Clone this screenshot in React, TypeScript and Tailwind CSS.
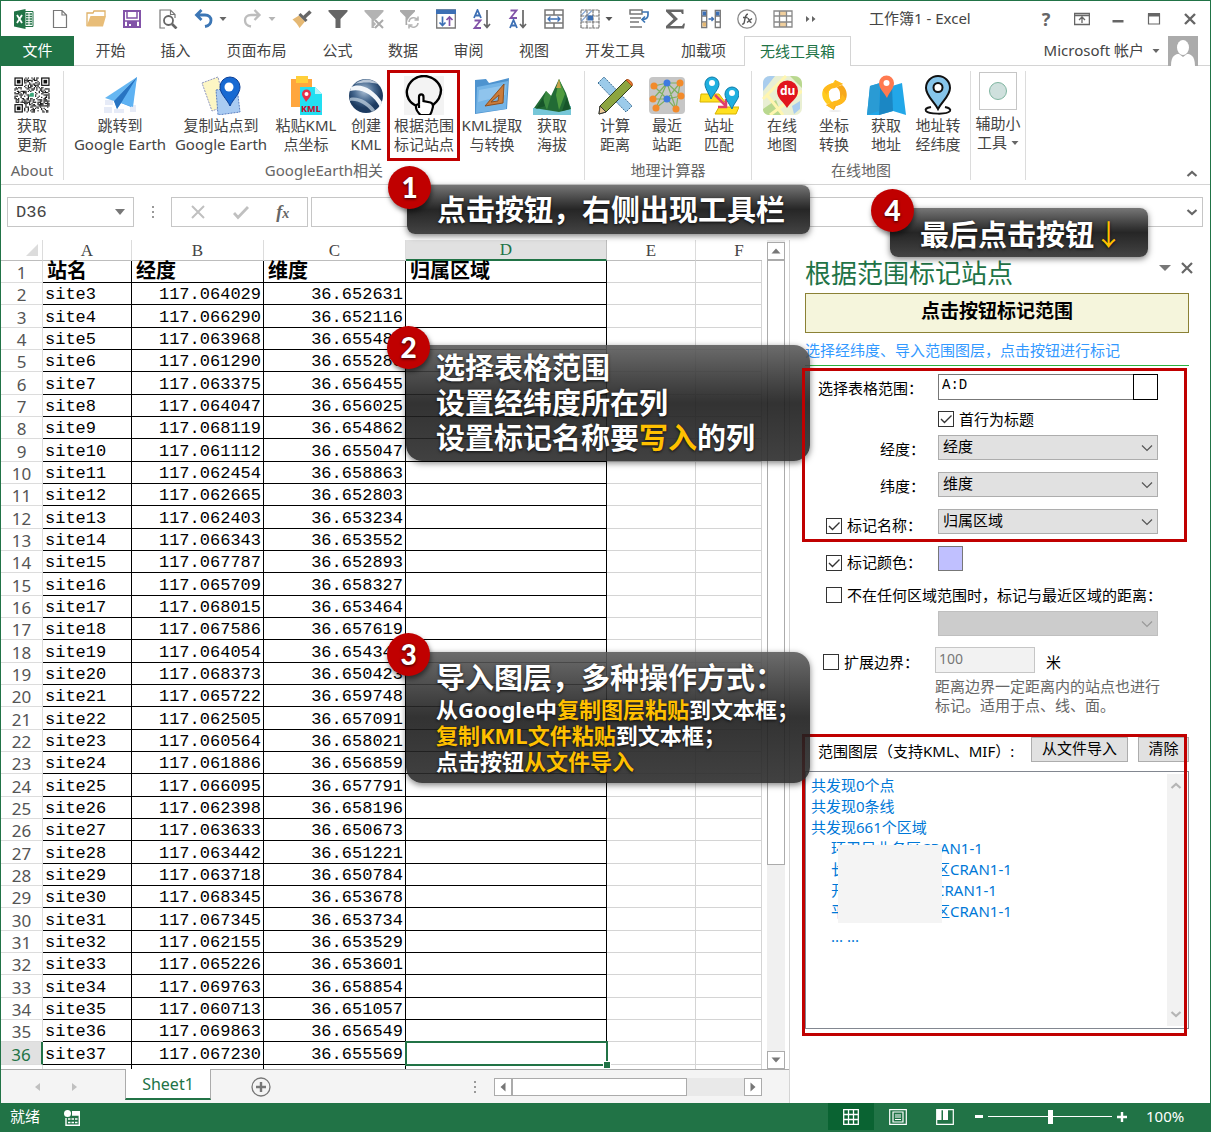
import { type ReactNode } from 'react';

const SITES = [
    ['site3', '117.064029', '36.652631'],
    ['site4', '117.066290', '36.652116'],
    ['site5', '117.063968', '36.655480'],
    ['site6', '117.061290', '36.655288'],
    ['site7', '117.063375', '36.656455'],
    ['site8', '117.064047', '36.656025'],
    ['site9', '117.068119', '36.654862'],
    ['site10', '117.061112', '36.655047'],
    ['site11', '117.062454', '36.658863'],
    ['site12', '117.062665', '36.652803'],
    ['site13', '117.062403', '36.653234'],
    ['site14', '117.066343', '36.653552'],
    ['site15', '117.067787', '36.652893'],
    ['site16', '117.065709', '36.658327'],
    ['site17', '117.068015', '36.653464'],
    ['site18', '117.067586', '36.657619'],
    ['site19', '117.064054', '36.654342'],
    ['site20', '117.068373', '36.650423'],
    ['site21', '117.065722', '36.659748'],
    ['site22', '117.062505', '36.657091'],
    ['site23', '117.060564', '36.658021'],
    ['site24', '117.061886', '36.656859'],
    ['site25', '117.066095', '36.657791'],
    ['site26', '117.062398', '36.658196'],
    ['site27', '117.063633', '36.650673'],
    ['site28', '117.063442', '36.651221'],
    ['site29', '117.063718', '36.650784'],
    ['site30', '117.068345', '36.653678'],
    ['site31', '117.067345', '36.653734'],
    ['site32', '117.062155', '36.653529'],
    ['site33', '117.065226', '36.653601'],
    ['site34', '117.069763', '36.658854'],
    ['site35', '117.060713', '36.651057'],
    ['site36', '117.069863', '36.656549'],
    ['site37', '117.067230', '36.655569'],
];

type IconProps = { children: ReactNode; size?: string; box?: string };

function Icon({ children, size = 'w-5 h-5', box = '0 0 20 20' }: IconProps) {
    return (
        <svg viewBox={box} className={`${size} shrink-0`} fill="none" aria-hidden="true">
            {children}
        </svg>
    );
}

function Caret({ color = '#666' }: { color?: string }) {
    return (
        <svg viewBox="0 0 8 4" className="h-1 w-2 shrink-0" aria-hidden="true">
            <path d="M0.5 0h7L4 4z" fill={color} />
        </svg>
    );
}

/* ---------- quick access toolbar ---------- */

const funnel = 'M0.500 1h19v1.500L12.500 10v9h-5v-9L0.500 2.500z';

const quickTools: { name: string; split?: string; icon: ReactNode }[] = [
    {
        name: 'Excel',
        icon: (
            <>
                <path d="M10 2.500h9v15h-9z" fill="#fff" stroke="#217346" />
                <path d="M12 5h2.500M15.500 5h2.500M12 7.500h2.500M15.500 7.500h2.500M12 10h2.500M15.500 10h2.500M12 12.500h2.500M15.500 12.500h2.500M12 15h2.500M15.500 15h2.500" stroke="#217346" strokeWidth="1.500" />
                <path d="M0 2.500L11.500 0v20L0 17.500z" fill="#217346" />
                <path d="M3 6l5 8M8 6l-5 8" stroke="#fff" strokeWidth="1.800" />
            </>
        ),
    },
    { name: '新建', icon: <path d="M3.500 1.500h8.500l4.500 4.500v12.500h-13zM12 1.500V6h4.500" stroke="#777" strokeWidth="1.200" fill="#fff" /> },
    {
        name: '打开',
        icon: (
            <>
                <path d="M1 17V4h6l1-2h11v5" stroke="#dfb269" strokeWidth="1.300" />
                <path d="M4.500 7H20l-3 10.500H0.500z" fill="#e8bd78" />
            </>
        ),
    },
    {
        name: '保存',
        icon: (
            <>
                <path d="M2 2h16v16H2z" stroke="#8253a8" strokeWidth="2" fill="#fff" />
                <path d="M5 2v7h10V2M2 12h16" stroke="#8253a8" strokeWidth="1.500" />
                <path d="M5 12h10v6H9v-3H7v3H5z" fill="#8253a8" />
            </>
        ),
    },
    {
        name: '打印预览',
        icon: (
            <>
                <path d="M7 19H2V1h10.500L17 5.500V9M12.500 1v4.500H17" stroke="#777" strokeWidth="1.200" />
                <circle cx="10.500" cy="11.500" r="4.500" stroke="#666" strokeWidth="1.800" />
                <path d="M14 15l4.500 4.500" stroke="#666" strokeWidth="2.600" />
            </>
        ),
    },
    {
        name: '撤消',
        split: '#666',
        icon: <path d="M7.500 1L2.500 6l5 5M2.500 6H11c8 0 8 10 0 11.500" stroke="#3c76b5" strokeWidth="2.800" />,
    },
    {
        name: '恢复',
        split: '#b5b5b5',
        icon: <path d="M11.500 1l5 5-5 5M16.500 6H8c-8 0-8 10 0 11.500" stroke="#bdbdbd" strokeWidth="2.300" />,
    },
    {
        name: '格式刷',
        icon: (
            <>
                <path d="M0.500 10.500L7 6.500l6 6L7.500 19c-1.500-3-4-6-7-8.500z" fill="#e5b873" />
                <path d="M7.500 5l7 7" stroke="#666" strokeWidth="3" />
                <path d="M12 8.500l6.500-6" stroke="#666" strokeWidth="3.600" />
            </>
        ),
    },
    { name: '筛选', icon: <path d={funnel} fill="#666" /> },
    {
        name: '清除筛选',
        icon: (
            <>
                <path d={funnel} fill="#b3b3b3" />
                <path d="M11 11l8 8M19 11l-8 8" stroke="#fff" strokeWidth="4" />
                <path d="M11 11l8 8M19 11l-8 8" stroke="#aaa" strokeWidth="2" />
            </>
        ),
    },
    {
        name: '重新应用',
        icon: (
            <>
                <path d="M0 1h15v1.500L9.500 8v8h-4V8L0 2.500z" fill="#aaa" />
                <circle cx="13.500" cy="13.500" r="6.500" fill="#fff" />
                <path d="M9 13c.5-5 7-5.500 8.500-2M18 7.500V11h-3.500M18 14c-.5 5-7 5.500-8.500 2M9 19.500V16h3.500" stroke="#b5b5b5" strokeWidth="1.600" />
            </>
        ),
    },
    {
        name: '排序',
        icon: (
            <>
                <path d="M0.700 1h18.600v18H0.700z" stroke="#777" strokeWidth="1.300" fill="#fff" />
                <path d="M0 0.500h20V5H0z" fill="#3c6fb4" />
                <path d="M6.500 7.500v9M3.500 13.500l3 3 3-3" stroke="#3c6fb4" strokeWidth="1.700" />
                <path d="M13.500 17V8M10.500 11l3-3 3 3" stroke="#8253a8" strokeWidth="1.700" />
            </>
        ),
    },
    {
        name: '升序',
        icon: (
            <>
                <path d="M2 9L5.500 1 9 9M3.200 6.500h4.600" stroke="#3c6fb4" strokeWidth="1.800" />
                <path d="M2.500 11.500h6L2.500 19h6.500" stroke="#8253a8" strokeWidth="1.800" />
                <path d="M15 1v17M12 15l3 3.500 3-3.500" stroke="#666" strokeWidth="1.700" />
            </>
        ),
    },
    {
        name: '降序',
        icon: (
            <>
                <path d="M2.500 1.500h6L2.500 9h6.500" stroke="#8253a8" strokeWidth="1.800" />
                <path d="M2 19l3.500-8L9 19M3.200 16.500h4.600" stroke="#3c6fb4" strokeWidth="1.800" />
                <path d="M15 1v17M12 15l3 3.500 3-3.500" stroke="#666" strokeWidth="1.700" />
            </>
        ),
    },
    {
        name: '合并后居中',
        icon: (
            <>
                <path d="M1 1h18v18H1zM1 6h18M1 14h18M10 1v5M10 14v5" stroke="#777" strokeWidth="1.500" />
                <path d="M4 10h12M6.500 7.500L4 10l2.500 2.500M13.500 7.500L16 10l-2.500 2.500" stroke="#3c6fb4" strokeWidth="1.300" />
            </>
        ),
    },
    {
        name: '冻结窗格',
        split: '#555',
        icon: (
            <>
                <path d="M1 6.500l5-5M1 12.500L12 1.500M6.500 7L12 1.500" stroke="#8aa9d6" strokeWidth="1.200" />
                <path d="M1 1h18v18H1zM7 1v18M13 1v18M1 7h18M1 13h18" stroke="#777" strokeWidth="1.200" strokeDasharray="3 0.600" />
                <path d="M7.500 6.500h5.500v5H7.500z" fill="#3c6fb4" />
            </>
        ),
    },
    {
        name: '自动换行',
        icon: (
            <>
                <path d="M1 1h12v4H1z" stroke="#777" strokeWidth="1.500" />
                <path d="M1 9h11M1 13h9M1 18h12" stroke="#777" strokeWidth="1.700" />
                <path d="M13 3h6v3c0 3-2 4.500-6 4.500M16 7.500l-3 3 3 3" stroke="#3c76b5" strokeWidth="1.700" />
            </>
        ),
    },
    { name: '自动求和', icon: <path d="M1 0.500h17.500V5H17l-1-2H6l7 7-8 7h12l1.500-2.500H20l-1 5H1V17l7.500-7L1 2.500z" fill="#666" /> },
    {
        name: '分列',
        icon: (
            <>
                <path d="M0.700 1.500h5v17h-5zM14.300 1.500h5v17h-5zM0.700 7h5M0.700 13h5M14.300 7h5M14.300 13h5" stroke="#777" strokeWidth="1.300" />
                <path d="M1.500 2.500h3.500v4H1.500zM15 2.500h3.500v4H15z" fill="#3c6fb4" />
                <path d="M1.500 13.500h3.500v4H1.500z" fill="#e5b873" />
                <path d="M7.500 10h5M10.500 8l2 2-2 2" stroke="#3c6fb4" strokeWidth="1.400" />
            </>
        ),
    },
    {
        name: '插入函数',
        icon: (
            <>
                <circle cx="10" cy="10" r="9.200" stroke="#888" strokeWidth="1.300" />
                <path d="M5 15c2 .5 2.200-1 2.800-4.500S9 5 11 5.300M6 8.500h4.500M10.500 9.500c2-.5 1.500 4.500 4 4M15 9.500l-5 4" stroke="#555" strokeWidth="1.400" />
            </>
        ),
    },
    {
        name: '单元格样式',
        icon: (
            <>
                <path d="M6.500 2h7v5h-7zM6.500 13h7v5h-7z" fill="#f0cf9d" />
                <path d="M1 2h18v16H1zM6.500 2v16M13.500 2v16M1 7h18M1 13h18" stroke="#888" strokeWidth="1.300" />
            </>
        ),
    },
];

function TitleBar() {
    return (
        <header className="flex h-[35px] items-center pl-[5px]">
            {quickTools.map((tool) => (
                <button key={tool.name} type="button" aria-label={tool.name} className={tool.split ? 'flex w-[49px] items-center gap-[5px] pl-2' : 'flex w-9 justify-center'}>
                    <Icon>{tool.icon}</Icon>
                    {tool.split && <Caret color={tool.split} />}
                </button>
            ))}
            <button type="button" aria-label="更多" className="flex w-5 justify-center">
                <Icon size="w-3 h-3" box="0 0 12 12">
                    <path d="M1 3l3.500 3L1 9zM7 3l3.500 3L7 9z" fill="#666" />
                </Icon>
            </button>
            <h1 className="ml-12 text-[15px] text-[#444]">工作簿1 - Excel</h1>
            <div className="ml-auto flex items-center pr-[2px]">
                <button type="button" className="w-9 text-center text-lg font-bold text-[#666]">?</button>
                <button type="button" aria-label="功能区显示选项" className="flex w-9 justify-center">
                    <Icon size="w-4 h-4" box="0 0 16 16">
                        <path d="M.6 2.500h14.800v11H.6zM.6 4.500h14.800M8 12V6.500M5 9l3-3 3 3" stroke="#666" strokeWidth="1.300" />
                    </Icon>
                </button>
                <button type="button" aria-label="最小化" className="flex w-9 justify-center">
                    <Icon size="w-4 h-4" box="0 0 16 16">
                        <path d="M2.500 9h11v2.500h-11z" fill="#666" />
                    </Icon>
                </button>
                <button type="button" aria-label="最大化" className="flex w-9 justify-center">
                    <Icon size="w-4 h-4" box="0 0 16 16">
                        <path d="M2.500 3h11v10h-11z" stroke="#666" strokeWidth="1.200" />
                        <path d="M2 2h12v3.500H2z" fill="#666" />
                    </Icon>
                </button>
                <button type="button" aria-label="关闭" className="flex w-9 justify-center">
                    <Icon size="w-4 h-4" box="0 0 16 16">
                        <path d="M3 3l10 10M13 3L3 13" stroke="#666" strokeWidth="2.400" />
                    </Icon>
                </button>
            </div>
        </header>
    );
}

const tabs = [
    ['开始', 'w-[65px]'],
    ['插入', 'w-[65px]'],
    ['页面布局', 'w-[97px]'],
    ['公式', 'w-[65px]'],
    ['数据', 'w-[66px]'],
    ['审阅', 'w-[65px]'],
    ['视图', 'w-[66px]'],
    ['开发工具', 'w-[96px]'],
    ['加载项', 'w-[81px]'],
];

function RibbonTabs() {
    return (
        <nav className="flex h-[30px] items-stretch text-[15px] text-[#444]">
            <button type="button" className="w-[73px] bg-[#217346] pb-[2px] text-white">文件</button>
            <div className="flex border-b border-[#d4d4d4] pl-1">
                {tabs.map(([name, width]) => (
                    <button key={name} type="button" className={width}>{name}</button>
                ))}
            </div>
            <button type="button" className="w-[107px] border border-b-0 border-[#d4d4d4] text-[#217346]">无线工具箱</button>
            <div className="flex flex-1 items-center justify-end border-b border-[#d4d4d4] pr-3">
                <button type="button" className="flex items-center gap-2">
                    Microsoft 帐户 <Caret />
                </button>
                <svg viewBox="0 0 30 30" className="ml-2 h-[30px] w-[30px]" aria-hidden="true">
                    <path d="M0 0h30v30H0z" fill="#ababab" />
                    <ellipse cx="15" cy="11.500" rx="6" ry="7.500" fill="#fff" />
                    <path d="M3 30c0-11 5-12 8-12l4 3 4-3c3 0 8 1 8 12z" fill="#fff" />
                </svg>
            </div>
        </nav>
    );
}

/* ---------- ribbon ---------- */

function QrIcon() {
    const cells = [];
    let seed = 17;
    for (let y = 0; y < 29; y++) {
        for (let x = 0; x < 29; x++) {
            seed = (seed * 1103515245 + 12345) % 2147483648;
            const finder = (x < 8 && y < 8) || (x > 20 && y < 8) || (x < 8 && y > 20);
            const logo = x > 11 && x < 17 && y > 11 && y < 17;
            if (!finder && !logo && seed / 2147483648 > 0.48) {
                cells.push(<rect key={`${x}-${y}`} x={x} y={y} width="1" height="1" fill="#111" />);
            }
        }
    }
    return (
        <svg viewBox="-2 -2 33 33" className="h-10 w-10" aria-hidden="true">
            {cells}
            {[[0, 0], [22, 0], [0, 22]].map(([x, y]) => (
                <g key={`${x}-${y}`} fill="#111">
                    <rect x={x + 0.5} y={y + 0.5} width="6" height="6" fill="none" stroke="#111" />
                    <rect x={x + 2} y={y + 2} width="3" height="3" />
                </g>
            ))}
            <path d="M12 16c0-3 2-4 4-3v3z" fill="#3aa67a" />
        </svg>
    );
}

const ribbonIcons: Record<string, ReactNode> = {
    plane: (
        <>
            <path d="M4 32h8v6H4zM14 34h10v4H14zM30 30h6v7h-6zM5 25h8v5H5z" fill="#e6ebf7" />
            <path d="M37 2L5 23l9 3z" fill="#66b7f2" />
            <path d="M37 2L14 26l3 8 4-6 10 4z" fill="#4a9fe6" />
            <path d="M37 2L21 28l12 4z" fill="#5eb2f3" />
            <path d="M14 26l3 8 4-6L37 2z" fill="#2874c2" />
        </>
    ),
    copyPin: (
        <>
            <path d="M1 8l16-6 7 29-13 5z" fill="#fdf6c4" stroke="#8f97c0" strokeDasharray="2 1" />
            <path d="M15 15l21-3 3 25-22 3z" fill="#a9cbf2" stroke="#5b7fc0" strokeDasharray="2 1" />
            <path d="M29 31c-3-7-10-12-10-19a10 10 0 0 1 20 0c0 7-7 12-10 19z" fill="#1769d2" stroke="#0c3f96" />
            <circle cx="28" cy="12" r="4.500" fill="#fff" />
        </>
    ),
    pasteKml: (
        <>
            <path d="M5 4h21v28H5z" fill="#ffa63d" />
            <path d="M10 1h12v7H10z" fill="#ffcf3a" />
            <path d="M14 12h15l7 7v21H14z" fill="#22dff2" />
            <path d="M29 12l7 7h-7z" fill="#b5f6fc" />
            <path d="M20 27c-1-3-4-5-4-8a4.500 4.500 0 0 1 9 0c0 3-3 5-5 8z" fill="#e3304b" />
            <circle cx="20.500" cy="19" r="2" fill="#fff" />
            <text x="15" y="37" fontSize="9" fontWeight="800" fill="#c8102e">KML</text>
        </>
    ),
    earth: (
        <>
            <defs>
                <radialGradient id="globe" cx=".45" cy=".35">
                    <stop offset="0" stopColor="#a9bed4" />
                    <stop offset=".6" stopColor="#47698f" />
                    <stop offset="1" stopColor="#1d3b60" />
                </radialGradient>
            </defs>
            <circle cx="20" cy="21" r="17" fill="url(#globe)" />
            <path d="M5 12C14 7 28 14 36 27l-2 5C27 19 15 13 4 16z" fill="#f2f6fa" />
            <path d="M4 23c9-2 19 4 25 12l-3 2C19 29 12 25 4 26z" fill="#c9d8e6" opacity=".7" />
            <path d="M9 9c7-6 17-6 23 0-8-2-15-2-23 0z" fill="#e9f0f6" opacity=".7" />
        </>
    ),
    hand: (
        <>
            <path d="M0 1h40v39H0z" fill="#f3f3f3" />
            <path d="M13 31C5 28 2 21 3 15 5 6 12 1 20 1s16 6 17 14c0 6-3 11-8 15" stroke="#000" strokeWidth="2.400" />
            <path d="M15 29v-7c0-3.500 4.500-3.500 4.500 0v4l7 1.500c3 1 3 3 2 6-1 4-2 6-3 6.500h-9c-3-3-5-6-4.500-9 .5-1.500 2-2 3-1v3" stroke="#000" strokeWidth="2.200" fill="#fff" />
        </>
    ),
    folder: (
        <>
            <path d="M3 5l11-1 3 4 20-5-2 31-32 5z" fill="#4e93cf" />
            <path d="M5 12l31-6-2 28-30 4z" fill="#74b4e6" />
            <path d="M7 15l27-5-1 10L6 27z" fill="#9bcbf0" opacity=".7" />
            <path d="M32 9L13 31l18-3zM27 20l-1 6-7 1z" fill="#c97b3b" fillRule="evenodd" stroke="#8f4f1d" />
        </>
    ),
    mountain: (
        <>
            <path d="M1 33l38-2v9H1z" fill="#77c7d8" />
            <path d="M2 33L14 16l5 5 8-17 7 14 5 16-12 3z" fill="#226b35" />
            <path d="M27 4l-3 16 3 15 6-16z" fill="#4f9b3f" />
            <path d="M14 16l-3 10 4 9 4-14z" fill="#3c8a41" />
            <path d="M4 34l7-11 2 8zM30 36l5-14 3 12z" fill="#17552a" />
            <path d="M27 4l-3 9h5z" fill="#c8a24a" />
        </>
    ),
    ruler: (
        <>
            <path d="M3 8l6-6 28 29-6 6z" fill="#9ccbea" stroke="#3b6d93" strokeDasharray="2 1" />
            <path d="M31 5l6 6-26 26-7 2 1-8z" fill="#8da540" stroke="#33411c" />
            <path d="M31 5c2-2 8 3 6 6z" fill="#ef7d32" stroke="#a54c17" />
            <path d="M4 39l1-8 6 6z" fill="#e9c894" stroke="#333" />
        </>
    ),
    network: (
        <>
            <rect x="2" y="2" width="36" height="37" rx="4" fill="#c6c6c6" />
            <path d="M20 8L7 11l13 13L6 24 20 8l-11 25 11-9 9 10L20 8l14 13-14 3L33 8 20 8M33 8l-4 26" stroke="#7fb05f" strokeWidth="1.200" />
            <g fill="#f28a2a">
                <circle cx="7" cy="11" r="3.500" />
                <circle cx="33" cy="8" r="3.500" />
                <circle cx="6" cy="24" r="3.500" />
                <circle cx="34" cy="21" r="3.500" />
                <circle cx="9" cy="33" r="3.500" />
                <circle cx="29" cy="34" r="3.500" />
            </g>
            <circle cx="20" cy="8" r="3.500" fill="#3f7be0" />
            <circle cx="20" cy="24" r="3.500" fill="#3f7be0" />
        </>
    ),
    match: (
        <>
            <path d="M2 19h18l6 8H1zM20 32h20l-3 7H16z" fill="#ffe01f" stroke="#d8b400" />
            <path d="M16 20l11 11M27 24v8h-8" stroke="#e0406a" strokeWidth="2.500" />
            <path d="M12 24C9 17 6 13 6 9a7 7 0 0 1 14 0c0 5-5 9-8 15zM33 34c-4-7-7-11-7-15a7 7 0 0 1 14 0c0 5-5 9-7 15z" fill="#1fb0e0" stroke="#0b7ba8" />
            <circle cx="13" cy="8" r="3" fill="#fff" />
            <circle cx="33" cy="18" r="3" fill="#fff" />
        </>
    ),
    baidu: (
        <>
            <rect x="1" y="1" width="39" height="39" rx="7" fill="#e9efd2" />
            <path d="M1 8c0-4 3-7 7-7h5L1 16z" fill="#a9cdee" />
            <path d="M31 1c6 0 9 3 9 8v4l-12-12zM1 34l13-9 6 15H8c-4 0-7-2-7-6z" fill="#b9d88f" />
            <path d="M1 24L24 1M8 40L40 16M5 20l16 20" stroke="#fff6b0" strokeWidth="3" />
            <path d="M30 31l8-5v8l-6 5z" fill="#a9cdee" />
            <path d="M25 33c-3-6-10-9-10-17a10 10 0 0 1 21 0c0 8-8 11-11 17z" fill="#e1141d" />
            <text x="18" y="20" fontSize="12" fontWeight="700" fill="#fff">du</text>
        </>
    ),
    convert: (
        <>
            <path d="M21 5l8 4c-10 1-15 5-14 12 0 3 2 5 4 7l-6 1c-4-4-6-9-4-14 2-4 6-6 10-7z" fill="#ffcb1f" />
            <path d="M20 35l-8-5c10 0 15-4 14-11 0-4-2-6-4-7l6-2c4 3 6 9 4 14-2 4-6 6-10 7z" fill="#f7a81b" />
            <path d="M9 15c2-4 7-7 12-7V5l8 4-8 4c-4 0-8 3-8 7M32 24c-2 4-7 7-12 7v4l-8-5 8-4c4 0 8-3 8-7" fill="#ffb91c" />
            <path d="M15 22v-6h6l-2 2 3 3-2 2-3-3zM26 17v7h-6z" fill="#fff" />
            <ellipse cx="21" cy="36" rx="6" ry="1" fill="#eee" />
        </>
    ),
    mapPin: (
        <>
            <path d="M4 11l10-3 12 3 10-3 4 32-13-4-14 4H1z" fill="#22a7e8" />
            <path d="M14 8l12 3 1 25-14 4z" fill="#1b87c4" />
            <path d="M4 11l10-3-1 28-12 4z" fill="#2a9bd4" />
            <path d="M21 23c-3-6-8-9-8-15a7.500 7.500 0 0 1 15 0c0 6-5 9-7 15z" fill="#ff7a50" />
            <circle cx="20.500" cy="8" r="3" fill="#fff" />
        </>
    ),
    address: (
        <>
            <path d="M13 32c-5 1-6 2-5 4 2 3 21 4 24 0 1-2-1-3-5-4" stroke="#111" strokeWidth="2" />
            <path d="M20 34C16 26 8 21 8 13a12 12 0 0 1 24 0c0 8-8 13-12 21z" fill="#86c5ea" stroke="#111" strokeWidth="2" />
            <circle cx="20" cy="12.500" r="4.500" fill="#fff" stroke="#111" strokeWidth="2" />
        </>
    ),
};

type Command = { icon: string; lines: [string, string]; width: string };

const earthCommands: Command[] = [
    { icon: 'plane', lines: ['跳转到', 'Google Earth'], width: 'w-[100px]' },
    { icon: 'copyPin', lines: ['复制站点到', 'Google Earth'], width: 'w-[102px]' },
    { icon: 'pasteKml', lines: ['粘贴KML', '点坐标'], width: 'w-[68px]' },
    { icon: 'earth', lines: ['创建', 'KML'], width: 'w-[52px]' },
    { icon: 'hand', lines: ['根据范围', '标记站点'], width: 'w-[64px]' },
    { icon: 'folder', lines: ['KML提取', '与转换'], width: 'w-[72px]' },
    { icon: 'mountain', lines: ['获取', '海拔'], width: 'w-[48px]' },
];

const geoCommands: Command[] = [
    { icon: 'ruler', lines: ['计算', '距离'], width: 'w-[52px]' },
    { icon: 'network', lines: ['最近', '站距'], width: 'w-[52px]' },
    { icon: 'match', lines: ['站址', '匹配'], width: 'w-[52px]' },
];

const mapCommands: Command[] = [
    { icon: 'baidu', lines: ['在线', '地图'], width: 'w-[52px]' },
    { icon: 'convert', lines: ['坐标', '转换'], width: 'w-[52px]' },
    { icon: 'mapPin', lines: ['获取', '地址'], width: 'w-[52px]' },
    { icon: 'address', lines: ['地址转', '经纬度'], width: 'w-[52px]' },
];

function RibbonGroup({ title, className, children }: { title: string; className: string; children: ReactNode }) {
    return (
        <section aria-label={title} className={`mb-1 mt-[5px] flex flex-col border-r border-[#dcdcdc] ${className}`}>
            <div className="flex flex-1">{children}</div>
            <p className="h-5 text-center text-[15px] leading-5 text-[#666]">{title}</p>
        </section>
    );
}

function CommandButton({ command }: { command: Command }) {
    return (
        <button type="button" className={`flex shrink-0 flex-col items-center whitespace-nowrap pt-1 text-[15px] leading-[19px] ${command.width}`}>
            <Icon size="w-10 h-10" box="0 0 40 40">{ribbonIcons[command.icon]}</Icon>
            <span className="mt-px">{command.lines[0]}</span>
            <span>{command.lines[1]}</span>
        </button>
    );
}

function Ribbon() {
    return (
        <div className="flex h-[119px] border-b border-[#d4d4d4] text-[#444]">
            <RibbonGroup title="About" className="w-[63px]">
                <button type="button" className="flex w-full flex-col items-center pt-1 text-[15px] leading-[19px]">
                    <QrIcon />
                    <span className="mt-px">获取</span>
                    <span>更新</span>
                </button>
            </RibbonGroup>
            <RibbonGroup title="GoogleEarth相关" className="w-[521px] px-[6px]">
                {earthCommands.map((c) => <CommandButton key={c.icon} command={c} />)}
            </RibbonGroup>
            <RibbonGroup title="地理计算器" className="w-[167px] px-1">
                {geoCommands.map((c) => <CommandButton key={c.icon} command={c} />)}
            </RibbonGroup>
            <RibbonGroup title="在线地图" className="w-[219px] px-1">
                {mapCommands.map((c) => <CommandButton key={c.icon} command={c} />)}
            </RibbonGroup>
            <section className="mb-1 mt-[5px] w-[55px] border-r border-[#dcdcdc]">
                <button type="button" className="flex w-full flex-col items-center whitespace-nowrap pt-px text-[15px] leading-[19px]">
                    <span className="flex h-[38px] w-[38px] items-center justify-center border border-[#c6c6c6]">
                        <span className="h-[18px] w-[18px] rounded-full border border-[#7fb5a0] bg-[#cfe0dd]" />
                    </span>
                    <span className="mt-1">辅助小</span>
                    <span className="flex items-center gap-1">工具 <Caret /></span>
                </button>
            </section>
            <button type="button" aria-label="折叠功能区" className="mb-1 ml-auto mr-3 self-end">
                <Icon size="w-3 h-3" box="0 0 12 12">
                    <path d="M1.500 8L6 4l4.500 4" stroke="#666" strokeWidth="2.200" />
                </Icon>
            </button>
        </div>
    );
}

function FormulaBar() {
    return (
        <div className="flex h-[55px] items-start pl-[6px] pr-[7px] pt-3">
            <div className="flex h-[30px] w-[127px] items-center border border-[#c6c6c6] pr-2">
                <input aria-label="名称框" defaultValue="D36" className="min-w-0 flex-1 pl-2 pt-[2px] font-['Liberation_Mono',monospace] text-[17px] text-[#444] outline-none" />
                <svg viewBox="0 0 10 6" className="h-[6px] w-[10px]" aria-hidden="true"><path d="M0 0h10L5 6z" fill="#777" /></svg>
            </div>
            <div className="flex h-[30px] w-[37px] flex-col items-center justify-center gap-[3px]">
                {[0, 1, 2].map((i) => <span key={i} className="h-[2px] w-[2px] bg-[#999]" />)}
            </div>
            <div className="flex h-[30px] w-[137px] items-center justify-around border border-[#c6c6c6] px-1">
                <button type="button" aria-label="取消">
                    <Icon size="w-4 h-4" box="0 0 16 16"><path d="M2 2l12 12M14 2L2 14" stroke="#c0c0c0" strokeWidth="2" /></Icon>
                </button>
                <button type="button" aria-label="输入">
                    <Icon size="w-4 h-4" box="0 0 16 16"><path d="M1 9l4 4.500L15 3" stroke="#c0c0c0" strokeWidth="2.800" /></Icon>
                </button>
                <button type="button" aria-label="插入函数" className="font-['Liberation_Serif',serif] text-lg font-bold italic text-[#666]">
                    f<span className="text-sm">x</span>
                </button>
            </div>
            <div className="ml-[3px] flex h-[30px] flex-1 items-center border border-[#c6c6c6] pr-1">
                <input aria-label="编辑栏" className="min-w-0 flex-1 px-2 outline-none" />
                <Icon size="w-3 h-3" box="0 0 12 12">
                    <path d="M1.500 4L6 8l4.500-4" stroke="#666" strokeWidth="2.200" />
                </Icon>
            </div>
        </div>
    );
}

/* ---------- worksheet ---------- */

const cell = 'border-b border-r border-black px-[2px] pt-[2px] pb-0 whitespace-nowrap';
const plainCell = 'border-b border-r border-[#d4d4d4]';
const headCell = 'border-b border-r border-[#bdbdbd] border-r-[#dcdcdc] font-normal';
const rowHead = "border-b border-r border-[#dcdcdc] pt-[2px] pb-0 text-center font-['Noto_Sans',sans-serif] font-normal text-[#555]";
const activeRowHead = "border-b border-r-2 border-b-[#dcdcdc] border-r-[#217346] bg-[#e1e1e1] pt-[2px] pb-0 font-['Noto_Sans',sans-serif] font-normal text-[#217346]";

function Worksheet() {
    return (
        <table className="w-full flex-1 table-fixed border-separate border-spacing-0 self-start font-['Liberation_Mono','Noto_Sans_CJK_SC',monospace] text-[17px] leading-[19px] text-black">
            <colgroup>
                <col className="w-[42px]" />
                <col className="w-[89px]" />
                <col className="w-[132px]" />
                <col className="w-[142px]" />
                <col className="w-[201px]" />
                <col className="w-[89px]" />
                <col />
            </colgroup>
            <thead className="font-['Liberation_Serif',serif] text-[17px] text-[#444]">
                <tr className="h-[21px]">
                    <th className={headCell}>
                        <svg viewBox="0 0 12 12" className="ml-auto mr-1 h-3 w-3" aria-hidden="true"><path d="M12 0v12H0z" fill="#dcdcdc" /></svg>
                    </th>
                    <th className={headCell}>A</th>
                    <th className={headCell}>B</th>
                    <th className={headCell}>C</th>
                    <th className="border-b-2 border-r border-b-[#217346] border-r-[#bdbdbd] bg-[#e1e1e1] font-normal text-[#217346]">D</th>
                    <th className={headCell}>E</th>
                    <th className="border-b border-[#bdbdbd] pl-5 font-normal">F</th>
                </tr>
            </thead>
            <tbody>
                <tr className="h-[22px] text-left font-bold">
                    <th className={rowHead}>1</th>
                    {['站名', '经度', '维度', '归属区域'].map((name) => (
                        <th key={name} className={`${cell} pl-1 text-[20px]`}>{name}</th>
                    ))}
                    <td className={plainCell} />
                    <td className={plainCell} />
                </tr>
                {SITES.map(([name, lng, lat], i) => {
                    const active = i === SITES.length - 1;
                    return (
                        <tr key={name} className={i % 3 === 1 ? 'h-[23px]' : 'h-[22px]'}>
                            <th className={active ? activeRowHead : rowHead}>{i + 2}</th>
                            <td className={cell}>{name}</td>
                            <td className={`${cell} text-right`}>{lng}</td>
                            <td className={`${cell} text-right`}>{lat}</td>
                            {active ? (
                                <td className="relative border-b border-r border-black outline-2 -outline-offset-1 outline-[#217346]">
                                    <span className="absolute -bottom-1 -right-1 h-[6px] w-[6px] bg-[#217346] outline-1 outline-white" />
                                </td>
                            ) : (
                                <td className={cell} />
                            )}
                            <td className={plainCell} />
                            <td className={plainCell} />
                        </tr>
                    );
                })}
                <tr className="h-1">
                    <td className="border-r border-[#dcdcdc]" />
                    <td className="border-r border-black" />
                    <td className="border-r border-black" />
                    <td className="border-r border-black" />
                    <td className="border-r border-black" />
                    <td className="border-r border-[#d4d4d4]" />
                    <td className="border-r border-[#d4d4d4]" />
                </tr>
            </tbody>
        </table>
    );
}

const scrollButton = 'flex h-[18px] w-[18px] shrink-0 items-center justify-center border border-[#ababab] bg-white';

function Arrow({ d }: { d: string }) {
    return (
        <svg viewBox="0 0 10 10" className="h-[10px] w-[10px]" aria-hidden="true">
            <path d={d} fill="#777" />
        </svg>
    );
}

function SheetTabs() {
    return (
        <div className="flex h-[34px] border-t border-[#ababab] bg-[#f4f4f4] pr-[27px]">
            <div className="flex w-[124px] items-center gap-[26px] pl-8">
                <button type="button" aria-label="上一个工作表"><svg viewBox="0 0 10 10" className="h-[10px] w-[10px]"><path d="M7 1v8L2 5z" fill="#c0c0c0" /></svg></button>
                <button type="button" aria-label="下一个工作表"><svg viewBox="0 0 10 10" className="h-[10px] w-[10px]"><path d="M3 1v8l5-4z" fill="#c0c0c0" /></svg></button>
            </div>
            <button type="button" className="-mt-px h-[31px] w-[86px] border-x border-b-2 border-x-[#ababab] border-b-[#217346] bg-white text-[16px] text-[#217346]">Sheet1</button>
            <button type="button" aria-label="新工作表" className="ml-10 self-center">
                <Icon>
                    <circle cx="10" cy="10" r="9" stroke="#777" strokeWidth="1.300" />
                    <path d="M10 5v10M5 10h10" stroke="#777" strokeWidth="2.400" />
                </Icon>
            </button>
            <div className="ml-auto flex items-center">
                <div className="mr-[18px] flex flex-col gap-[3px]">
                    {[0, 1, 2].map((i) => <span key={i} className="h-[2px] w-[2px] bg-[#999]" />)}
                </div>
                <button type="button" aria-label="向左滚动" className={scrollButton}><Arrow d="M7.500 0.500v9L2.500 5z" /></button>
                <div className="h-[18px] w-[175px] border border-[#ababab] bg-white" />
                <div className="h-[18px] w-[57px] bg-[#e9e9e9]" />
                <button type="button" aria-label="向右滚动" className={scrollButton}><Arrow d="M2.500 0.500v9L7.500 5z" /></button>
            </div>
        </div>
    );
}

/* ---------- task pane ---------- */

function CheckBox({ label, checked = false, className = '' }: { label: string; checked?: boolean; className?: string }) {
    return (
        <label className={`flex items-center gap-[5px] whitespace-nowrap ${className}`}>
            <span className="relative h-4 w-4 shrink-0">
                <input type="checkbox" defaultChecked={checked} className="peer block h-4 w-4 appearance-none border border-[#333] bg-white" />
                <svg viewBox="0 0 16 16" className="pointer-events-none absolute inset-0 hidden h-4 w-4 peer-checked:block" fill="none" aria-hidden="true">
                    <path d="M3 8l3.500 3.500L13.500 4.500" stroke="#333" strokeWidth="1.400" />
                </svg>
            </span>
            {label}
        </label>
    );
}

function DropDown({ label, value, disabled = false }: { label: string; value: string; disabled?: boolean }) {
    return (
        <span className="relative block h-[25px] w-[220px]">
            <select
                aria-label={label}
                disabled={disabled}
                className="h-[25px] w-full appearance-none border border-[#adadad] bg-[#e1e1e1] pb-[2px] pl-1 text-[15px] leading-[21px] text-black disabled:border-[#bfbfbf] disabled:bg-[#cccccc] disabled:opacity-100"
            >
                <option>{value}</option>
            </select>
            <svg viewBox="0 0 12 8" className="pointer-events-none absolute right-[5px] top-[9px] h-2 w-3" fill="none" aria-hidden="true">
                <path d="M1 1.500l5 5 5-5" stroke={disabled ? '#999' : '#555'} strokeWidth="1.200" />
            </svg>
        </span>
    );
}

function FieldRow({ label, children }: { label: ReactNode; children: ReactNode }) {
    return (
        <div className="flex h-[25px] items-center">
            <div className="w-[133px] shrink-0 pt-1">{label}</div>
            {children}
        </div>
    );
}

const systemButton = 'h-[25px] border border-[#adadad] bg-[#e1e1e1] pb-1 text-[15px] leading-[20px]';

const layers = [
    { start: '环卫局业务区', end: 'CRAN1-1', width: 'w-[90px]' },
    { start: '长', end: '区CRAN1-1', width: 'w-[104px]' },
    { start: '开', end: 'CRAN1-1', width: 'w-[104px]' },
    { start: '平', end: '区CRAN1-1', width: 'w-[104px]' },
];

function TaskPane() {
    return (
        <aside className="w-[421px] shrink-0 border-l border-[#d4d4d4] pb-[74px] pl-[15px] pr-[21px] text-[15px] text-black">
            <div className="-mr-[6px] flex h-[53px] items-start pt-[13px]">
                <h2 className="text-[26px] leading-10 text-[#217346]">根据范围标记站点</h2>
                <div className="ml-auto mt-[7px] flex items-center gap-2">
                    <button type="button" aria-label="任务窗格选项"><svg viewBox="0 0 12 6" className="h-[6px] w-3"><path d="M0 0h12L6 6z" fill="#777" /></svg></button>
                    <button type="button" aria-label="关闭窗格">
                        <Icon size="w-4 h-4" box="0 0 16 16"><path d="M3 3l10 10M13 3L3 13" stroke="#666" strokeWidth="2.200" /></Icon>
                    </button>
                </div>
            </div>
            <button type="button" className="block h-10 w-full border border-[#8b8135] bg-[#f5f5dc] pb-1 text-[19px] font-bold">点击按钮标记范围</button>
            <p className="flex h-[33px] items-end border-b border-[#2bb23f] pb-1 leading-[22px] text-[#3399ff]">选择经纬度、导入范围图层，点击按钮进行标记</p>

            <form className="pt-2">
                <div className="flex h-[25px] items-center">
                    <label htmlFor="range" className="w-[133px] shrink-0 pl-[13px] pt-1">选择表格范围：</label>
                    <input id="range" defaultValue="A:D" className="h-[26px] w-[195px] border border-r-0 border-[#777] px-[3px] pb-1 font-['Liberation_Mono',monospace] text-sm outline-none" />
                    <button type="button" aria-label="选取范围" className="h-[26px] w-[25px] border border-black bg-white" />
                </div>
                <CheckBox label="首行为标题" checked className="h-9 pl-[133px] pt-1" />
                <div className="flex flex-col gap-3">
                    <FieldRow label={<span className="block pr-[13px] text-right">经度：</span>}><DropDown label="经度" value="经度" /></FieldRow>
                    <FieldRow label={<span className="block pr-[13px] text-right">纬度：</span>}><DropDown label="纬度" value="维度" /></FieldRow>
                    <FieldRow label={<CheckBox label="标记名称：" checked className="pl-[21px] pt-1" />}><DropDown label="标记名称" value="归属区域" /></FieldRow>
                    <FieldRow label={<CheckBox label="标记颜色：" checked className="pl-[21px] pt-1" />}>
                        <button type="button" aria-label="标记颜色" className="h-[25px] w-[25px] border border-[#777] bg-[#c0c0ff]" />
                    </FieldRow>
                </div>
                <CheckBox label="不在任何区域范围时，标记与最近区域的距离：" className="h-10 pl-[21px] pt-2" />
                <div className="pl-[133px]"><DropDown label="最近区域的距离" value="" disabled /></div>
                <div className="mt-[11px] flex items-center">
                    <CheckBox label="扩展边界：" className="w-[130px] pl-[18px] pt-1" />
                    <input aria-label="扩展边界距离" defaultValue="100" disabled className="h-[26px] w-[100px] border border-[#c6c6c6] bg-[#f2f2f2] px-[3px] pb-1 text-sm text-[#777]" />
                    <span className="ml-[11px] pt-1">米</span>
                </div>
                <p className="ml-[130px] mt-[3px] w-[228px] leading-[19px] text-[#666]">距离边界一定距离内的站点也进行标记。适用于点、线、面。</p>
                <div className="mt-[22px] flex h-[26px] items-center">
                    <span className="w-[226px] whitespace-nowrap pl-[13px] pt-1">范围图层（支持KML、MIF）:</span>
                    <button type="button" className={`w-[97px] ${systemButton}`}>从文件导入</button>
                    <button type="button" className={`ml-auto w-[51px] ${systemButton}`}>清除</button>
                </div>
            </form>

            <div className="relative mt-2 flex h-[258px] border border-[#828790]">
                <div className="flex-1 pl-[5px] pt-[3px] leading-[21px] text-[#0078d7]">
                    <p>共发现0个点</p>
                    <p>共发现0条线</p>
                    <p>共发现661个区域</p>
                    <ul className="pl-5">
                        {layers.map((layer) => (
                            <li key={layer.start} className="flex">
                                <span className={`shrink-0 ${layer.width}`}>{layer.start}</span>
                                {layer.end}
                            </li>
                        ))}
                    </ul>
                    <p className="pl-5 pt-1">... ...</p>
                </div>
                <div className="absolute left-8 top-[73px] h-[78px] w-[104px] bg-[#f4f4f4]" />
                <div className="my-[2px] mr-[3px] flex w-[18px] flex-col items-center justify-between bg-[#f2f2f2] py-[6px]">
                    <Icon size="w-3 h-3" box="0 0 12 12"><path d="M1.500 8L6 4l4.500 4" stroke="#b5b5b5" strokeWidth="2.200" /></Icon>
                    <Icon size="w-3 h-3" box="0 0 12 12"><path d="M1.500 4L6 8l4.500-4" stroke="#b5b5b5" strokeWidth="2.200" /></Icon>
                </div>
            </div>
        </aside>
    );
}

function StatusBar() {
    return (
        <footer className="flex h-[29px] items-center bg-[#217346] pl-[9px] text-[15px] text-white">
            <span className="mb-[3px]">就绪</span>
            <Icon size="ml-6 w-4 h-4" box="0 0 16 16">
                <circle cx="3.500" cy="3.500" r="3.500" fill="#fff" />
                <path d="M8 1h8v4H8z" fill="#fff" />
                <path d="M2 8v7.300h13.300V5H8M4 9h2.500M7.500 9H10M11 9h2.500M4 12.500h2.500M7.500 12.500H10M11 12.500h2.500" stroke="#fff" strokeWidth="1.400" />
            </Icon>
            <div className="ml-auto flex h-full items-center pb-[2px]">
                <button type="button" aria-label="普通" className="flex h-full w-[46px] items-center justify-center bg-[#0a6332]">
                    <Icon size="w-4 h-4" box="0 0 16 16"><path d="M.7.7h14.600v14.600H.7zM5.500.7v14.600M10.500.7v14.600M.7 5.500h14.600M.7 10.500h14.600" stroke="#fff" strokeWidth="1.300" /></Icon>
                </button>
                <button type="button" aria-label="页面布局" className="flex w-12 justify-center">
                    <Icon size="w-[18px] h-4" box="0 0 18 16"><path d="M.7.7h16.600v14.600H.7zM4 3h10v10H4zM6 6h6M6 8h6M6 10.500h6" stroke="#fff" strokeWidth="1.200" /></Icon>
                </button>
                <button type="button" aria-label="分页预览" className="flex w-[46px] justify-center">
                    <Icon size="w-[18px] h-4" box="0 0 18 16">
                        <path d="M.7.7h16.600v14.600H.7z" stroke="#fff" strokeWidth="1.200" />
                        <path d="M1 1h4.500v10H1zM7 1h5v10H7z" fill="#fff" />
                    </Icon>
                </button>
                <button type="button" aria-label="缩小" className="ml-[7px] h-[3px] w-2 bg-white" />
                <input
                    type="range"
                    aria-label="缩放"
                    defaultValue="50"
                    className="ml-[5px] h-4 w-[124px] appearance-none bg-transparent bg-linear-to-r from-white to-white bg-[length:100%_1px] bg-center bg-no-repeat [&::-webkit-slider-thumb]:h-[14px] [&::-webkit-slider-thumb]:w-[5px] [&::-webkit-slider-thumb]:appearance-none [&::-webkit-slider-thumb]:bg-white"
                />
                <button type="button" aria-label="放大" className="ml-1">
                    <Icon size="w-3 h-3" box="0 0 12 12"><path d="M6 1v10M1 6h10" stroke="#fff" strokeWidth="2.400" /></Icon>
                </button>
                <span className="w-[82px] pl-[18px]">100%</span>
            </div>
        </footer>
    );
}

/* ---------- tutorial notes on top of the window ---------- */

const note = 'absolute pl-[30px] font-bold text-white text-shadow-[0_1px_3px_rgb(0_0_0/0.8)] shadow-[0_2px_6px_rgb(0_0_0/0.5)] bg-linear-to-b';
const solid = 'from-[#777777] via-[#262626] to-[#444444]';
const clear = 'from-[#5c5c5c]/90 via-[#1c1c1c]/90 to-[#2c2c2c]/90';

function Badge({ n }: { n: number }) {
    return (
        <span className="absolute -left-[19px] -top-[19px] flex h-[43px] w-[43px] items-center justify-center rounded-full bg-[#c00000] pb-[2px] font-['Lato',sans-serif] text-[28px] font-black leading-none text-white shadow-[1px_3px_5px_rgb(0_0_0/0.5)]">
            {n}
        </span>
    );
}

function Hl({ children }: { children: ReactNode }) {
    return <em className="not-italic text-[#ffc000]">{children}</em>;
}

const notes = [
    {
        box: `left-[406px] top-[184px] h-[49px] w-[403px] rounded-lg text-[29px] leading-[49px] ${solid}`,
        text: '点击按钮，右侧出现工具栏',
    },
    {
        box: `left-[405px] top-[344px] h-[116px] w-[404px] rounded-2xl pt-[5px] text-[29px] leading-[35px] ${clear}`,
        text: <>选择表格范围<br />设置经纬度所在列<br />设置标记名称要<Hl>写入</Hl>的列</>,
    },
    {
        box: `left-[405px] top-[651px] h-[131px] w-[404px] rounded-2xl pt-2 text-[22px] leading-[26px] whitespace-nowrap ${clear}`,
        text: (
            <>
                <p className="text-[29px] leading-[36px]">导入图层，多种操作方式：</p>
                <p>从Google中<Hl>复制图层粘贴</Hl>到文本框；</p>
                <p><Hl>复制KML文件粘贴</Hl>到文本框；</p>
                <p>点击按钮<Hl>从文件导入</Hl></p>
            </>
        ),
    },
    {
        box: `left-[889px] top-[207px] h-[49px] w-[258px] rounded-lg text-[29px] leading-[50px] ${solid}`,
        text: <>最后点击按钮<em className="font-['Noto_Sans_CJK_SC',sans-serif] font-normal not-italic text-[#ffc000]">↓</em></>,
    },
];

function Notes() {
    return (
        <>
            <div className="absolute left-[386px] top-[69px] h-[91px] w-[73px] border-3 border-[#c00000]" />
            <div className="absolute right-[23px] top-[733px] h-[302px] w-[385px] border-3 border-[#c00000]" />
            {notes.map((item, i) => (
                <div key={i} className={`${note} ${item.box}`}>
                    {item.text}
                    <Badge n={i + 1} />
                </div>
            ))}
            <div className="absolute right-[23px] top-[367px] h-[174px] w-[385px] border-3 border-[#c00000]" />
        </>
    );
}

export default function App() {
    return (
        <div className="relative flex min-h-screen flex-col border-x border-t border-[#217346] bg-white font-['Noto_Sans','Noto_Sans_CJK_SC',sans-serif]">
            <TitleBar />
            <RibbonTabs />
            <Ribbon />
            <FormulaBar />
            <main className="flex flex-1">
                <div className="flex min-w-0 flex-1 flex-col">
                    <div className="flex flex-1 pr-1">
                        <Worksheet />
                        <div className="ml-[5px] flex w-[18px] shrink-0 flex-col bg-[#f0f0f0] pt-[2px]">
                            <button type="button" aria-label="向上滚动" className={scrollButton}><Arrow d="M5 2.500L9.500 7.500h-9z" /></button>
                            <div className="h-[605px] border border-[#ababab] bg-white" />
                            <button type="button" aria-label="向下滚动" className={`mt-auto ${scrollButton}`}><Arrow d="M5 7.500L9.500 2.500h-9z" /></button>
                        </div>
                    </div>
                    <SheetTabs />
                </div>
                <TaskPane />
            </main>
            <StatusBar />
            <Notes />
        </div>
    );
}
